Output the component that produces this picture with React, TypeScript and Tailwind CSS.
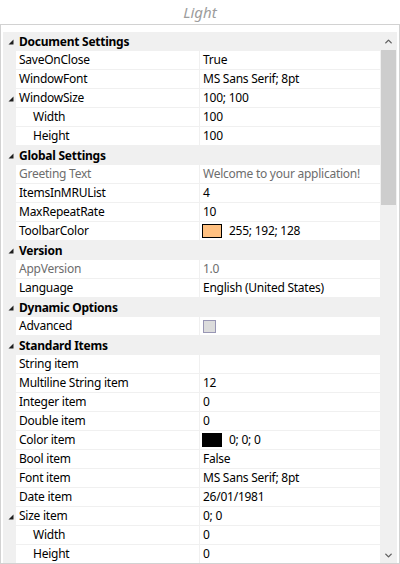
import { ChevronDown, ChevronUp } from "lucide-react";

type Row = {
  label: string;
  value?: string;
  cat?: boolean;
  open?: boolean;
  sub?: boolean;
  dim?: boolean;
  swatch?: string;
  check?: boolean;
};

const rows: Row[] = [
  { label: "Document Settings", cat: true },
  { label: "SaveOnClose", value: "True" },
  { label: "WindowFont", value: "MS Sans Serif; 8pt" },
  { label: "WindowSize", value: "100; 100", open: true },
  { label: "Width", value: "100", sub: true },
  { label: "Height", value: "100", sub: true },
  { label: "Global Settings", cat: true },
  { label: "Greeting Text", value: "Welcome to your application!", dim: true },
  { label: "ItemsInMRUList", value: "4" },
  { label: "MaxRepeatRate", value: "10" },
  { label: "ToolbarColor", value: "255; 192; 128", swatch: "#ffc080" },
  { label: "Version", cat: true },
  { label: "AppVersion", value: "1.0", dim: true },
  { label: "Language", value: "English (United States)" },
  { label: "Dynamic Options", cat: true },
  { label: "Advanced", check: true },
  { label: "Standard Items", cat: true },
  { label: "String item", value: "" },
  { label: "Multiline String item", value: "12" },
  { label: "Integer item", value: "0" },
  { label: "Double item", value: "0" },
  { label: "Color item", value: "0; 0; 0", swatch: "#000000" },
  { label: "Bool item", value: "False" },
  { label: "Font item", value: "MS Sans Serif; 8pt" },
  { label: "Date item", value: "26/01/1981" },
  { label: "Size item", value: "0; 0", open: true },
  { label: "Width", value: "0", sub: true },
  { label: "Height", value: "0", sub: true },
];

function Expander() {
  return (
    <svg width="6" height="6" viewBox="0 0 6 6" className="block">
      <polygon points="5.5,0.5 5.5,5.5 0.5,5.5" fill="#1e1e1e" />
    </svg>
  );
}

function GridRow({ row }: { row: Row }) {
  const expander = row.cat || row.open;
  return (
    <div className="flex h-[19px] shrink-0">
      <div className="w-[13px] shrink-0 bg-[#f0f0f0] flex items-center justify-end pr-[2px]">
        {expander && <Expander />}
      </div>
      {row.cat ? (
        <div className="flex-1 bg-[#f0f0f0] pl-[3px] flex items-center font-bold text-black">
          {row.label}
        </div>
      ) : (
        <div className="flex-1 flex border-b border-[#f0f0f0]">
          <div
            className={`w-[184px] shrink-0 bg-white border-r border-[#f0f0f0] flex items-center ${
              row.sub ? "pl-[17px]" : "pl-[3px]"
            } ${row.dim ? "text-[#6d6d6d]" : "text-black"}`}
          >
            {row.label}
          </div>
          <div
            className={`flex-1 bg-white flex items-center pl-[3px] whitespace-nowrap overflow-hidden ${
              row.dim ? "text-[#6d6d6d]" : "text-black"
            }`}
          >
            {row.swatch && (
              <span
                className="w-[20px] h-[14px] border border-black mr-[7px] -ml-[1px] shrink-0"
                style={{ backgroundColor: row.swatch }}
              />
            )}
            {row.check && (
              <span className="w-[13px] h-[13px] border border-[#9896b4] bg-[#dcdcdc] shrink-0" />
            )}
            {row.value}
          </div>
        </div>
      )}
    </div>
  );
}

export default function App() {
  return (
    <div
      className="w-[400px] h-[564px] bg-white flex flex-col overflow-hidden text-[12px] leading-none tracking-[-0.25px]"
      style={{ fontFamily: '"Noto Sans", "Open Sans", sans-serif' }}
    >
      <div className="h-6 shrink-0 flex items-center justify-center italic text-[15px] tracking-normal text-[#9c9c9c]">
        Light
      </div>
      <div className="flex-1 min-h-0 border border-[#d2d2d2] pt-[7px] pl-[2px] pr-[2px] flex">
        <div className="flex-1 min-w-0 flex flex-col overflow-hidden">
          {rows.map((row, i) => (
            <GridRow key={i} row={row} />
          ))}
        </div>
        <div className="w-[17px] shrink-0 bg-[#f0f0f0] flex flex-col items-center">
          <div className="h-[18px] flex items-center justify-center text-[#606060]">
            <ChevronUp size={11} strokeWidth={3} />
          </div>
          <div className="w-[15px] h-[155px] bg-[#cdcdcd]" />
          <div className="flex-1" />
          <div className="h-[16px] flex items-center justify-center text-[#606060]">
            <ChevronDown size={11} strokeWidth={3} />
          </div>
        </div>
      </div>
    </div>
  );
}
